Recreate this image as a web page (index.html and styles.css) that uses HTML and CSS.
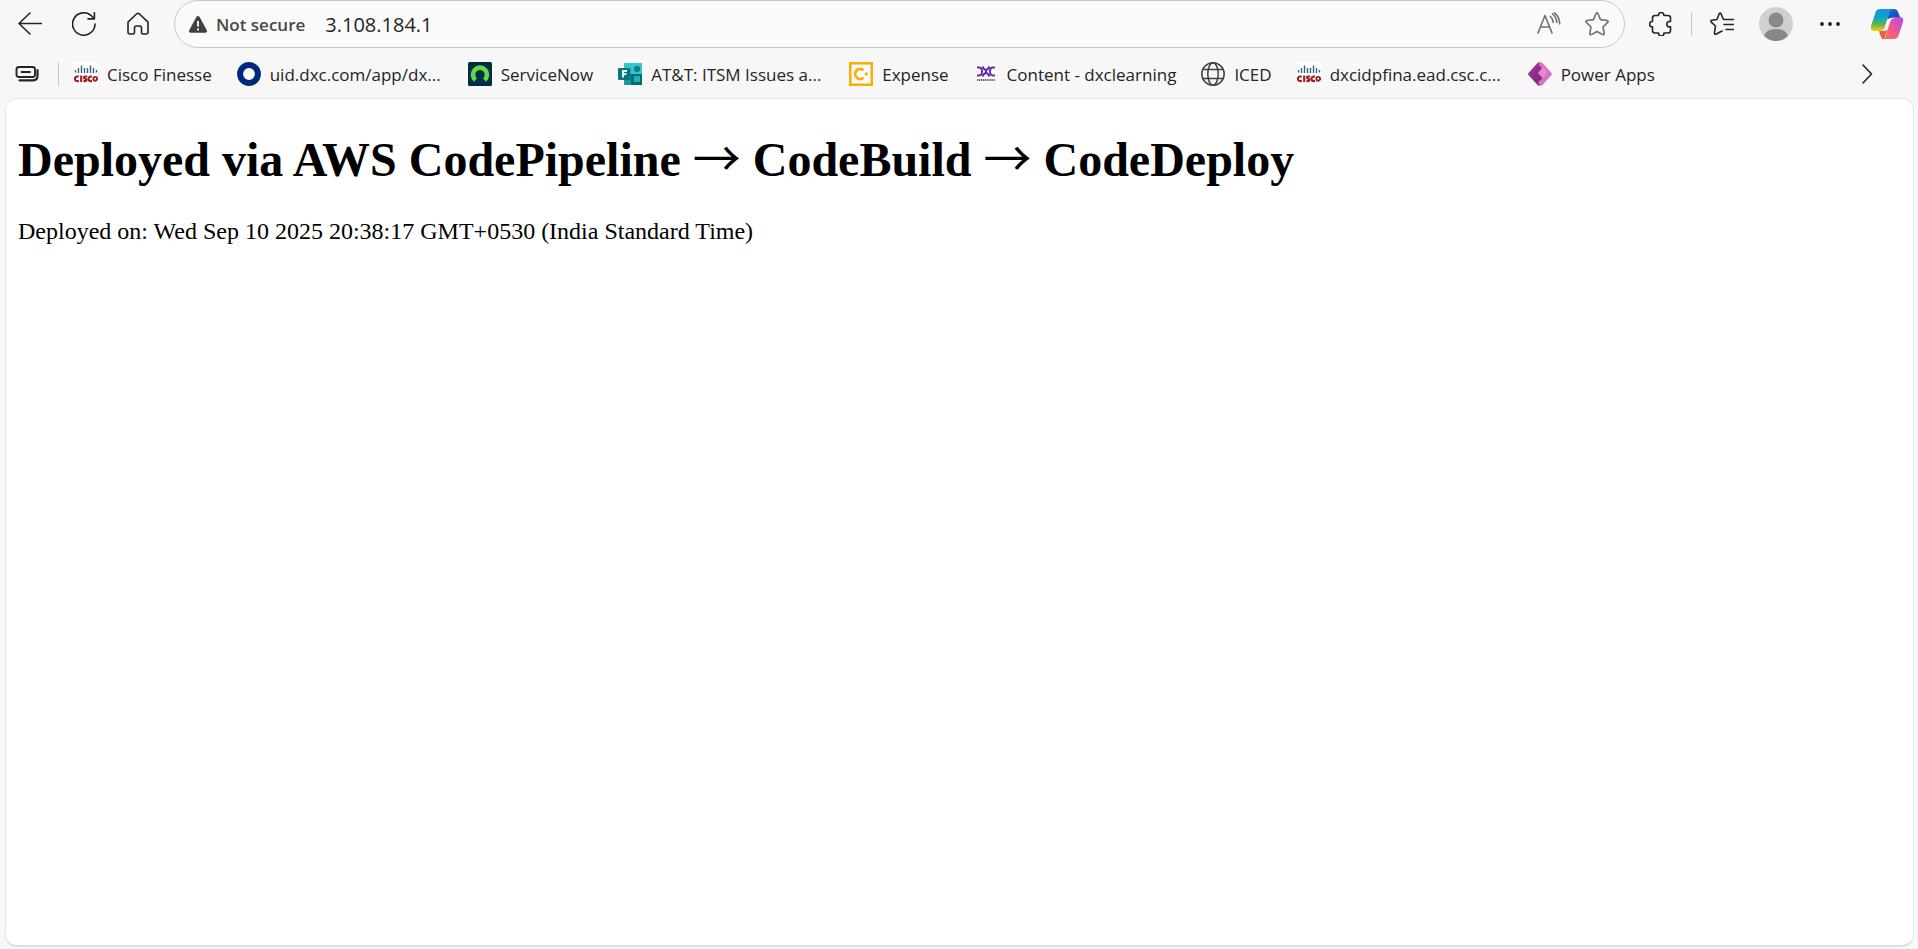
FILE: index.html
```html
<!DOCTYPE html>
<html lang="en">
<head>
<meta charset="utf-8">
<title>3.108.184.1</title>
<link rel="stylesheet" href="styles.css">
</head>
<body>
<svg class="defs" width="0" height="0" aria-hidden="true">
  <defs>
    <linearGradient id="cpTop" x1="0" y1="0" x2="0" y2="1"><stop offset="0" stop-color="#1b8fe8"/><stop offset=".4" stop-color="#0ea5c6"/><stop offset=".7" stop-color="#5fb548"/><stop offset="1" stop-color="#f6cf0c"/></linearGradient>
    <linearGradient id="cpBottom" x1="1" y1="0" x2="0" y2="1"><stop offset="0" stop-color="#a94bf0"/><stop offset=".5" stop-color="#f0559a"/><stop offset="1" stop-color="#fb7a3c"/></linearGradient>
    <linearGradient id="cpFold" x1="0" y1="0" x2="1" y2="1"><stop offset="0" stop-color="#1d6fe0"/><stop offset="1" stop-color="#0b3fb8"/></linearGradient>
    <linearGradient id="paDark" x1="0" y1="0" x2="1" y2="1"><stop offset="0" stop-color="#a8369c"/><stop offset="1" stop-color="#742774"/></linearGradient>
    <symbol id="cisco" viewBox="0 0 24 24">
      <rect width="24" height="24" fill="#fff"/>
      <path d="M1.500 8v2.500M4.500 6v5M7.500 3.500v7.500M10.500 6v5M13.500 6v5M16.500 3.500v7.500M19.500 6v5M22.500 8v2.500" stroke="#2b6686" stroke-width="1.400" fill="none"/>
      <path d="M4.800 14.500H3.200a2.300 2.300 0 0 0 0 4.600h1.600M7.200 13.500v6.500M13.200 14.500h-2q-1.300 0-1.300 1.100t1.300 1.200 1.300 1.200-1.300 1.100H9.500M18 14.500h-1.200a2.300 2.300 0 0 0 0 4.600H18" stroke="#a31d22" stroke-width="2.100" fill="none"/>
      <circle cx="21.200" cy="16.800" r="1.900" stroke="#a31d22" stroke-width="1.900" fill="none"/>
    </symbol>
  </defs>
</svg>
<header class="browser">
  <div class="toolbar">
    <nav class="nav-buttons" aria-label="Navigation">
      <button class="icon-button" aria-label="Back"><svg class="icon" viewBox="0 0 24 24"><path d="M24 11.500H1M12 1 1 11.500 12 22"/></svg></button>
      <button class="icon-button" aria-label="Refresh"><svg class="icon" viewBox="0 0 24 24"><path d="M23 12A11.200 11.200 0 1 1 18.500 3L22.200 6.500M22.400.5v6.400H16"/></svg></button>
      <button class="icon-button" aria-label="Home"><svg class="icon" viewBox="0 0 24 24"><path d="M2 10.200 10.500 2q1.500-1.300 3 0L22 10.200V20q0 2-2 2h-3q-1.500 0-1.500-1.500V16q0-2-2-2h-3q-2 0-2 2v4.500Q8.500 22 7 22H4q-2 0-2-2z"/></svg></button>
    </nav>
    <div class="address-bar">
      <svg class="warning" viewBox="0 0 18 17"><path d="M9 0q1 0 1.600 1l7.100 13q1 2.400-1.400 2.800H1.700Q-.7 16.400.3 14L7.400 1Q8 0 9 0z" fill="#404040"/><path d="M9 5v5.500M9 12.500v2" stroke="#fff" stroke-width="1.800"/></svg>
      <span class="security">Not secure</span>
      <input class="url" type="text" value="3.108.184.1" aria-label="Address">
      <button class="icon-button muted" aria-label="Read aloud"><svg class="icon" viewBox="0 0 24 24"><path d="M1 21 8 3.500 15 21M3.500 15h9M13.500 4.500q2.700 2.500 2.700 6M15.500 1.800q4 3 4.300 8.700M17.500.8q5.200 4 5.200 11.200"/></svg></button>
      <button class="icon-button muted" aria-label="Add to favorites"><svg class="icon" viewBox="0 0 24 24"><path d="M11 1.800q1-1.800 2 0L15.500 7.600l6.500.9q1.800.5.600 1.900L18 15l1.200 6.400q0 1.700-1.600 1.200L12 19.500l-5.600 3.100q-1.600.5-1.600-1.200L6 15 1.400 10.400Q.2 9 2 8.500l6.500-.9z"/></svg></button>
    </div>
    <div class="actions">
      <button class="icon-button" aria-label="Extensions"><svg class="icon" viewBox="0 0 24 24"><path d="M6 3.500H9.500v-.3a2.700 2.700 0 0 1 5.400 0v.3H19q2.500 0 2.500 2.500v3.500h-1a2.700 2.700 0 0 0 0 5.400h1V18.500q0 2.500-2.500 2.500h-4v.3a2.700 2.700 0 0 1-5.400 0V21H6q-2.500 0-2.500-2.500v-3.600h-.2a2.700 2.700 0 0 1 0-5.400h.2V6q0-2.500 2.500-2.500z"/></svg></button>
      <span class="divider"></span>
      <button class="icon-button" aria-label="Favorites"><svg class="icon" viewBox="0 0 24 24"><path d="M16 7.500H14.300q-.8 0-1.200-.8L11.100 2Q10.100.3 9.100 2L7 7.500l-5.300.8q-1.500.5-.5 1.800L5.500 14l-1 7q0 1.600 1.500 1.200L12 19M16 7.500h8M14 12.500h10M16 17.500h8"/></svg></button>
      <button class="icon-button" aria-label="Profile"><svg class="avatar" viewBox="0 0 34 34"><circle cx="17" cy="17" r="17" fill="#d2d0ce"/><circle cx="17" cy="13" r="7.500" fill="#8a8886"/><path d="M5 29q2-7 12-7t12 7a17 17 0 0 1-24 0z" fill="#8a8886"/></svg></button>
      <button class="icon-button" aria-label="Settings and more"><svg class="icon" viewBox="0 0 24 24"><g fill="#242424" stroke="none"><circle cx="4" cy="12" r="1.900"/><circle cx="12" cy="12" r="1.900"/><circle cx="20" cy="12" r="1.900"/></g></svg></button>
      <button class="icon-button" aria-label="Copilot"><svg class="copilot" viewBox="0 0 34 32"><path d="M20 1h4q3 0 4 3l2 5h-5q-3 0-4 3l-4-1z" fill="url(#cpFold)"/><path d="M10 1h13q-3 1-4 4l-4 14q-1 4-5 4H4q-4 0-3-5L5 6q1-5 5-5z" fill="url(#cpTop)"/><path d="M9 23h1q4 0 5-4l1-1 1 5-3 8q-2 1-3-2z" fill="#ed5a3c"/><path d="M25 9h5q4 0 3 5l-4 12q-1 5-5 5H13q2-1 3-4l4-14q1-4 5-4z" fill="url(#cpBottom)"/><path d="M21 10h3q-3 1-4 4l-2 6q-1 3-4 3h-3q3-1 4-4l2-6q1-3 4-3z" fill="#f7f7f7"/></svg></button>
    </div>
  </div>
  <nav class="bookmarks" aria-label="Favorites bar">
    <button class="icon-button" aria-label="Workspaces"><svg class="icon" viewBox="0 0 24 24"><path d="M4 5h13.500q2.500 0 2.500 2.500v5q0 2.500-2.500 2.500H4q-2.500 0-2.500-2.500v-5Q1.500 5 4 5z" stroke-width="1.900"/><path d="M6.500 10h8.500" stroke-width="1.800"/><path d="M4.500 18.300h13.500q4.500 0 4.500-4.500V8" stroke-width="2.200"/></svg></button>
    <span class="divider"></span>
    <a class="bookmark" href="#"><svg class="favicon"><use href="#cisco"/></svg><span>Cisco Finesse</span></a>
    <a class="bookmark long" href="#"><svg class="favicon" viewBox="0 0 24 24"><circle cx="12" cy="12" r="8.900" fill="#fff" stroke="#00297a" stroke-width="6"/></svg><span>uid.dxc.com/app/dx...</span></a>
    <a class="bookmark" href="#"><svg class="favicon" viewBox="0 0 24 24"><rect width="24" height="24" rx="1.500" fill="#032d42"/><path d="M7.500 18A7 7 0 1 1 16.500 18" fill="none" stroke="#62d84e" stroke-width="4.600"/></svg><span>ServiceNow</span></a>
    <a class="bookmark long" href="#"><svg class="favicon" viewBox="0 0 24 24"><rect x="6" y="1" width="18" height="22" rx="1" fill="#1a9ba1"/><path d="M6 1h18v11H6z" fill="#37c6d0"/><circle cx="19" cy="7" r="3.200" fill="#1a7f85"/><path d="M13 12h11v11H13z" fill="#036c70"/><path d="M16 14h6v6h-6z" fill="#1fb1b8"/><rect y="6" width="12.500" height="12" rx="1" fill="#03787c"/><path d="M5 15.500V9h4M5 12.200h3.500" fill="none" stroke="#fff" stroke-width="1.800"/></svg><span>AT&amp;T: ITSM Issues a...</span></a>
    <a class="bookmark" href="#"><svg class="favicon" viewBox="0 0 24 24"><rect x="1.300" y="1.300" width="21.400" height="21.400" fill="#fff" stroke="#f8af08" stroke-width="2.600"/><path d="M14.500 8.200a5 5 0 1 0 0 7.600" fill="none" stroke="#f8af08" stroke-width="2.800"/><circle cx="17.300" cy="12" r="1.700" fill="#f8af08"/></svg><span>Expense</span></a>
    <a class="bookmark" href="#"><svg class="favicon" viewBox="0 0 24 24"><rect x="3" y="3" width="18" height="17" fill="#fff"/><path d="M3 5.500h2Q8 5.500 8 9.500t-3 4H3M21 5.500h-2q-3 0-3 4t3 4h2" fill="none" stroke="#6428a8" stroke-width="1.900"/><path d="M8.500 4.500q1.500 3.500 3.500 3.500t3.500-3.500M8.500 14.500Q10 11 12 11t3.500 3.500M12 8v3" fill="none" stroke="#6428a8" stroke-width="2"/><path d="M3 18h18" stroke="#666" stroke-width="2" stroke-dasharray="1.300 .6"/></svg><span>Content - dxclearning</span></a>
    <a class="bookmark" href="#"><svg class="favicon" viewBox="0 0 24 24"><g fill="none" stroke="#404040" stroke-width="1.500"><circle cx="12" cy="12" r="11.200"/><ellipse cx="12" cy="12" rx="5.200" ry="11.200"/><path d="M2 7.500h20M2 16.500h20"/></g></svg><span>ICED</span></a>
    <a class="bookmark long" href="#"><svg class="favicon"><use href="#cisco"/></svg><span>dxcidpfina.ead.csc.c...</span></a>
    <a class="bookmark" href="#"><svg class="favicon" viewBox="0 0 24 24"><path d="M10 .5h2.500L16 5l-5 6.500 5 6-4 6h-2L.5 13q-.8-1 0-2z" fill="url(#paDark)"/><path d="M12 .5h2L23.500 11q.8 1 0 2L14 23.500h-2l-2-3 4.500-4.500-4.500-5 4-5-3.500-3z" fill="#da70c2"/><path d="m15 5 4.500 5-4.500 6-4.500-5z" fill="#e48bd0"/></svg><span>Power Apps</span></a>
    <button class="icon-button overflow" aria-label="More favorites"><svg class="icon" viewBox="0 0 24 24"><path d="m8 3 8.500 9L8 21"/></svg></button>
  </nav>
</header>
<main class="page">
  <h1>Deployed via AWS CodePipeline <span class="arrow">→</span> CodeBuild <span class="arrow">→</span> CodeDeploy</h1>
  <p>Deployed on: Wed Sep 10 2025 20:38:17 GMT+0530 (India Standard Time)</p>
</main>
</body>
</html>
```
FILE: styles.css
```css
* { box-sizing: border-box; }

body {
  margin: 0;
  min-height: 100vh;
  display: flex;
  flex-direction: column;
  background: #f7f7f7;
  color: #242424;
  font-family: "Open Sans", "Noto Sans", sans-serif;
}

.defs { position: absolute; }

.toolbar {
  display: flex;
  align-items: center;
  height: 48px;
  padding: 0 13px 0 12px;
  gap: 18px;
}

.nav-buttons { display: flex; gap: 18px; }

.icon-button {
  display: flex;
  align-items: center;
  justify-content: center;
  flex: none;
  width: 36px;
  height: 36px;
  padding: 0;
  border: 0;
  background: none;
  color: #242424;
}

.icon-button.muted { color: #707070; }

.icon {
  width: 24px;
  height: 24px;
  fill: none;
  stroke: currentColor;
  stroke-width: 1.6;
  stroke-linecap: round;
  stroke-linejoin: round;
}

.address-bar {
  display: flex;
  align-items: center;
  flex: 1;
  height: 48px;
  padding: 0 9px 0 14px;
  border: 1px solid #c8c8c8;
  border-radius: 24px;
  background: #fafafa;
}

.address-bar .icon-button { margin-left: 12px; }

.warning { width: 18px; height: 17px; margin-right: 9px; }

.security {
  font-size: 17px;
  font-weight: 600;
  color: #484848;
}

.url {
  flex: 1;
  min-width: 0;
  margin-left: 20px;
  padding: 0;
  border: 0;
  outline: 0;
  background: none;
  color: #242424;
  font: 20px "Open Sans", "Noto Sans", sans-serif;
}

.actions { display: flex; align-items: center; gap: 18px; }
.actions .divider { margin: 0 -6px; }
.actions .icon-button:last-child { margin-left: 3px; }

.divider { flex: none; width: 1px; height: 24px; background: #c8c8c8; }

.avatar { width: 34px; height: 34px; }
.copilot { width: 34px; height: 32px; }

.bookmarks {
  display: flex;
  align-items: center;
  height: 50px;
  padding: 2px 33px 0 9px;
  font-size: 17px;
}

.bookmarks .divider { margin: 0 15px 0 13px; }

.bookmark {
  display: flex;
  align-items: center;
  gap: 9px;
  margin-right: 25px;
  color: #242424;
  text-decoration: none;
  white-space: nowrap;
}

.bookmark.long span { width: 173px; }

.favicon { flex: none; width: 24px; height: 24px; }

.overflow { margin-left: auto; }

.page {
  flex: 1;
  margin: 0 4px 2px 5px;
  padding: 32px 12px;
  border: 1px solid #e6e6e6;
  border-bottom: 2px solid #e0e0e0;
  border-radius: 12px;
  background: #fff;
  color: #000;
  font-family: "Liberation Serif", "Times New Roman", serif;
}

.page h1 { margin: 0 0 29px; font-size: 48px; line-height: 56px; }
.page p { margin: 0; font-size: 24px; line-height: 28px; }

.arrow {
  font-family: "Noto Sans CJK JP", sans-serif;
  font-weight: 400;
  line-height: 1;
}
```
